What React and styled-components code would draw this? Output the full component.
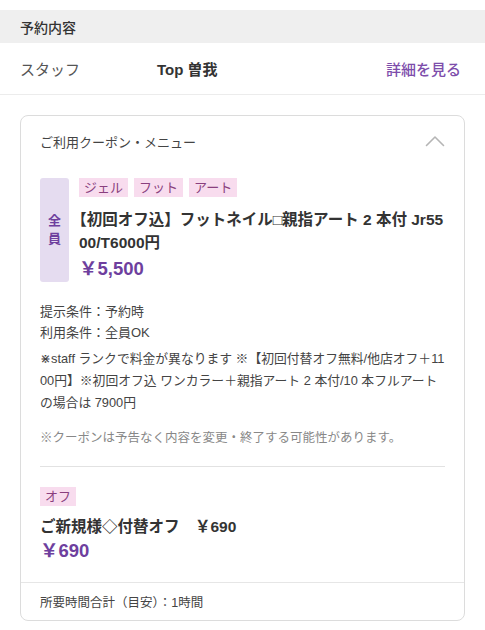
import React from 'react'
import styled, { createGlobalStyle } from 'styled-components'

const GlobalStyle = createGlobalStyle`
  body {
    margin: 0;
    background: #fff;
    font-family: "Liberation Sans", "Noto Sans CJK JP", sans-serif;
    color: #333;
  }
`

const Page = styled.div`
  width: 485px;
  padding-top: 10px;
`

const SectionHead = styled.div`
  background: #efefef;
  height: 33px;
  display: flex;
  align-items: center;
  padding: 0 20px;
  font-size: 14px;
  font-weight: 500;
  color: #333;
`

const StaffRow = styled.div`
  height: 51px;
  display: flex;
  align-items: center;
  padding: 0 24px 0 20px;
  border-bottom: 1px solid #ececec;
  font-size: 15px;
`

const StaffLabel = styled.span`
  width: 137px;
  color: #555;
`

const StaffName = styled.span`
  flex: 1;
  font-weight: 700;
  color: #333;
`

const DetailLink = styled.a`
  color: #7d4dab;
  font-weight: 500;
  text-decoration: none;
`

const Card = styled.div`
  margin: 20px 20px 0;
  border: 1px solid #dcdcdc;
  border-radius: 8px;
  overflow: hidden;
`

const CardBody = styled.div`
  padding: 0 19px;
`

const CardHeader = styled.div`
  height: 50px;
  display: flex;
  align-items: center;
  justify-content: space-between;
  font-size: 13px;
  color: #444;
`

const Coupon = styled.div`
  display: flex;
  gap: 10px;
  margin-top: 12px;
`

const TargetBadge = styled.div`
  width: 29px;
  flex-shrink: 0;
  border-radius: 3px;
  background: #e5dcf0;
  color: #6e3f9e;
  font-size: 13px;
  font-weight: 700;
  line-height: 18px;
  display: flex;
  align-items: center;
  justify-content: center;
  text-align: center;
  padding: 0 8px;
  box-sizing: border-box;
`

const CouponMain = styled.div`
  flex: 1;
  min-width: 0;
`

const Tags = styled.div`
  display: flex;
  gap: 6px;
`

const Tag = styled.span`
  background: #f8dcee;
  color: #8a3f7e;
  font-size: 13px;
  line-height: 19px;
  padding: 0 5px;
`

const ItemTitle = styled.div`
  margin-top: ${({ $gap }) => $gap || 11}px;
  font-size: 15.5px;
  font-weight: 700;
  line-height: 23px;
  color: #333;
  word-break: break-all;
  text-spacing-trim: trim-start;
`

const Price = styled.div`
  margin-top: ${({ $gap }) => $gap ?? 2}px;
  font-size: 18.5px;
  font-weight: 700;
  line-height: 26px;
  color: #6e3f9e;
`

const Conditions = styled.div`
  margin-top: 19px;
  font-size: 13px;
  line-height: 21px;
  color: #444;
`

const Description = styled.p`
  margin: 5px 0 0;
  font-size: 12.8px;
  line-height: 22px;
  color: #444;
  word-break: break-all;
`

const Note = styled.p`
  margin: 14px 0 0;
  font-size: 12.5px;
  line-height: 20px;
  color: #888;
`

const Divider = styled.hr`
  margin: 18px 0 0;
  border: 0;
  border-top: 1px solid #e2e2e2;
`

const Option = styled.div`
  padding: 20px 0 18px;
`

const CardFooter = styled.div`
  border-top: 1px solid #e6e6e6;
  padding: 0 19px;
  height: 37px;
  display: flex;
  align-items: center;
  font-size: 12.5px;
  color: #444;
`

const Chevron = () => (
  <svg width="20" height="12" viewBox="0 0 20 12" fill="none">
    <path d="M1.5 10.5 L10 2 L18.5 10.5" stroke="#b5b5b5" strokeWidth="1.6" strokeLinecap="round" strokeLinejoin="round" />
  </svg>
)

export default function App() {
  return (
    <>
      <GlobalStyle />
      <Page>
        <SectionHead>予約内容</SectionHead>
        <StaffRow>
          <StaffLabel>スタッフ</StaffLabel>
          <StaffName>Top 曽我</StaffName>
          <DetailLink href="#">詳細を見る</DetailLink>
        </StaffRow>

        <Card>
          <CardBody>
            <CardHeader>
              <span>ご利用クーポン・メニュー</span>
              <Chevron />
            </CardHeader>

            <Coupon>
              <TargetBadge>全員</TargetBadge>
              <CouponMain>
                <Tags>
                  <Tag>ジェル</Tag>
                  <Tag>フット</Tag>
                  <Tag>アート</Tag>
                </Tags>
                <ItemTitle>【初回オフ込】フットネイル□親指アート 2 本付 Jr5500/T6000円</ItemTitle>
                <Price>￥5,500</Price>
              </CouponMain>
            </Coupon>

            <Conditions>
              <div>提示条件：予約時</div>
              <div>利用条件：全員OK</div>
            </Conditions>
            <Description>
              ⋇staff ランクで料金が異なります ※【初回付替オフ無料/他店オフ＋1100円】※初回オフ込 ワンカラー＋親指アート 2 本付/10 本フルアートの場合は 7900円
            </Description>
            <Note>※クーポンは予告なく内容を変更・終了する可能性があります。</Note>
            <Divider />

            <Option>
              <Tags>
                <Tag>オフ</Tag>
              </Tags>
              <ItemTitle $gap={9}>ご新規様◇付替オフ　￥690</ItemTitle>
              <Price $gap={0}>￥690</Price>
            </Option>
          </CardBody>
          <CardFooter>所要時間合計（目安）：1時間</CardFooter>
        </Card>
      </Page>
    </>
  )
}
